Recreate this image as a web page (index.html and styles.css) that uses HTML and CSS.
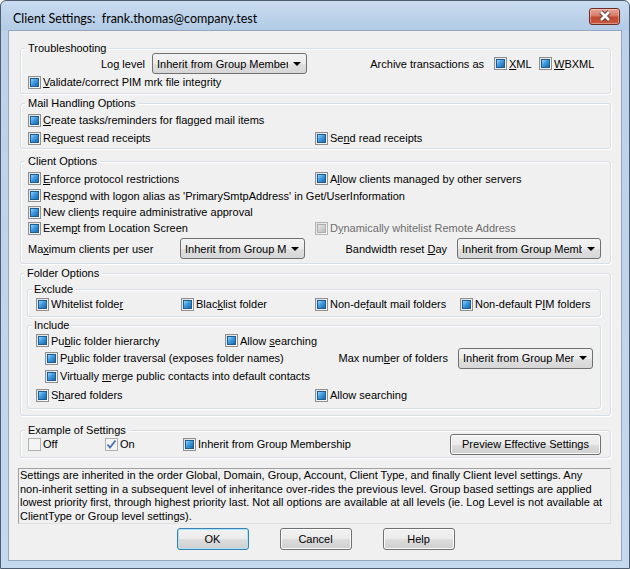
FILE: index.html
```html
<!DOCTYPE html>
<html lang="en">
<head>
  <meta charset="UTF-8" />
  <title>Client Settings</title>
  <link rel="stylesheet" href="styles.css">
</head>
<body>
  <div class="window">
    <div class="titlebar">
      <span class="title">Client Settings:&nbsp; frank.thomas@company.test</span>
      <button class="close" aria-label="Close">
        <svg width="16" height="12" viewBox="0 0 16 12">
          <path d="M4 2 L12 10 M12 2 L4 10" stroke="#6b3a33" stroke-width="4.6" />
          <path d="M4 2 L12 10 M12 2 L4 10" stroke="#ffffff" stroke-width="2.6" />
        </svg>
      </button>
    </div>

    <div class="client">

      <div class="group troubleshooting">
        <div class="group-title">Troubleshooting</div>
        <div class="row row-combo first-combo">
          <span class="field-label log-label">Lo<u>g</u> level</span>
          <div class="combo combo-log"><span class="combo-text">Inherit from Group Membership</span><span class="combo-arrow"></span></div>
          <span class="archive-label">Archive transactions as</span>
          <label class="check w-xml"><span class="cb"></span><span><u>X</u>ML</span></label>
          <label class="check w-wbxml"><span class="cb"></span><span><u>W</u>BXML</span></label>
        </div>
        <div class="row h16">
          <label class="check"><span class="cb"></span><span><u>V</u>alidate/correct PIM mrk file integrity</span></label>
        </div>
      </div>

      <div class="group mail">
        <div class="group-title">Mail Handling Options</div>
        <div class="row h18 first">
          <label class="check"><span class="cb"></span><span><u>C</u>reate tasks/reminders for flagged mail items</span></label>
        </div>
        <div class="row h18">
          <label class="check col-left"><span class="cb"></span><span>Re<u>q</u>uest read receipts</span></label>
          <label class="check"><span class="cb"></span><span>Se<u>n</u>d read receipts</span></label>
        </div>
      </div>

      <div class="group client-options">
        <div class="group-title">Client Options</div>
        <div class="row first">
          <label class="check col-left"><span class="cb"></span><span><u>E</u>nforce protocol restrictions</span></label>
          <label class="check"><span class="cb"></span><span>A<u>l</u>low clients managed by other servers</span></label>
        </div>
        <div class="row">
          <label class="check"><span class="cb"></span><span>Resp<u>o</u>nd with logon alias as 'PrimarySmtpAddress' in Get/UserInformation</span></label>
        </div>
        <div class="row h16">
          <label class="check"><span class="cb"></span><span>New clien<u>t</u>s require administrative approval</span></label>
        </div>
        <div class="row h16">
          <label class="check col-left"><span class="cb"></span><span>Exem<u>p</u>t from Location Screen</span></label>
          <label class="check disabled"><span class="cb cb-disabled"></span><span>D<u>y</u>namically whitelist Remote Address</span></label>
        </div>
        <div class="row row-combo">
          <span class="field-label max-label">Ma<u>x</u>imum clients per user</span>
          <div class="combo combo-max"><span class="combo-text">Inherit from Group Membership</span><span class="combo-arrow"></span></div>
          <span class="field-label bw-label">Bandwidth reset <u>D</u>ay</span>
          <div class="combo combo-bw"><span class="combo-text">Inherit from Group Membership</span><span class="combo-arrow"></span></div>
        </div>
      </div>

      <div class="group folder">
        <div class="group-title">Folder Options</div>

        <div class="group sub exclude">
          <div class="group-title">Exclude</div>
          <div class="row h16 exclude-row">
            <label class="check"><span class="cb"></span><span>Whitelist folde<u>r</u></span></label>
            <label class="check"><span class="cb"></span><span>Blac<u>k</u>list folder</span></label>
            <label class="check"><span class="cb"></span><span>Non-de<u>f</u>ault mail folders</span></label>
            <label class="check"><span class="cb"></span><span>Non-default P<u>I</u>M folders</span></label>
          </div>
        </div>

        <div class="group sub include">
          <div class="group-title">Include</div>
          <div class="row">
            <label class="check col-pub"><span class="cb"></span><span>Pu<u>b</u>lic folder hierarchy</span></label>
            <label class="check"><span class="cb"></span><span>Allow <u>s</u>earching</span></label>
          </div>
          <div class="row h18 indent">
            <label class="check"><span class="cb"></span><span>P<u>u</u>blic folder traversal (exposes folder names)</span></label>
            <span class="field-label folders-label">Max num<u>b</u>er of folders</span>
            <div class="combo combo-folders"><span class="combo-text">Inherit from Group Membership</span><span class="combo-arrow"></span></div>
          </div>
          <div class="row h18 indent">
            <label class="check"><span class="cb"></span><span>Virtually <u>m</u>erge public contacts into default contacts</span></label>
          </div>
          <div class="row h20">
            <label class="check col-left-sub"><span class="cb"></span><span>S<u>h</u>ared folders</span></label>
            <label class="check"><span class="cb"></span><span>Allow searching</span></label>
          </div>
        </div>
      </div>

      <div class="group example">
        <div class="group-title">Example of Settings</div>
        <div class="row h18 example-row">
          <label class="check col-off"><span class="cb cb-off"></span><span>Off</span></label>
          <label class="check col-on"><span class="cb cb-off"><svg width="11" height="11" viewBox="0 0 11 11"><path d="M1.5 5.5 L4 8.5 L9.5 1.5" fill="none" stroke="#4d6fb5" stroke-width="1.8" /></svg></span><span>On</span></label>
          <label class="check"><span class="cb"></span><span>Inherit from Group Membership</span></label>
          <button class="btn btn-preview">Preview Effective Settings</button>
        </div>
      </div>

      <div class="info">
        Settings are inherited in the order Global, Domain, Group, Account, Client Type, and finally Client level settings. Any<br>
        non-inherit setting in a subsequent level of inheritance over-rides the previous level. Group based settings are applied<br>
        lowest priority first, through highest priority last. Not all options are available at all levels (ie. Log Level is not available at<br>
        ClientType or Group level settings).
      </div>

      <div class="buttons">
        <button class="btn btn-default">OK</button>
        <button class="btn">Cancel</button>
        <button class="btn">Help</button>
      </div>
    </div>
  </div>
</body>
</html>
```

FILE: styles.css
```css
html, body {
  margin: 0;
  padding: 0;
  background: #ffffff;
}

body {
  font-family: 'Liberation Sans', Arial, sans-serif;
  font-size: 11px;
  color: #000;
}

.window {
  width: 630px;
  height: 569px;
  box-sizing: border-box;
  border: 1px solid #4e5d70;
  border-radius: 6px 6px 0 0;
  background: linear-gradient(to bottom, #c9dbef 0, #b3cbe6 29px, #bcd2ea 30px, #c4d8ee 100%);
  display: flex;
  flex-direction: column;
}

.titlebar {
  height: 29px;
  display: flex;
  align-items: center;
  padding: 0 0 0 12px;
  flex: none;
}

.title {
  font-family: Lato, 'Liberation Sans', sans-serif;
  font-size: 12.5px;
  color: #000;
  padding-top: 6px;
  flex: 1;
}

.close {
  width: 31px;
  height: 17px;
  margin: 1px 9px 0 0;
  padding: 0;
  border: 1px solid #6e2b22;
  border-radius: 3px;
  background: linear-gradient(to bottom, #e8a597 0%, #d97a66 45%, #c2482f 55%, #c95a40 100%);
  box-shadow: inset 0 0 0 1px rgba(255, 255, 255, 0.35);
  display: flex;
  align-items: center;
  justify-content: center;
}

.client {
  flex: 1;
  margin: 0 7px 7px;
  border: 1px solid #93a8c0;
  background: #f0f0f0;
  padding: 17px 10px 0 11px;
}

/* group boxes */
.group {
  border: 1px solid #d5dfe5;
  border-radius: 3px;
  padding: 0 7px;
  box-shadow: inset 1px 1px 0 #fff, 1px 1px 0 #fff;
}

.sub {
  padding: 0 7px 0 8px;
}

.group-title {
  display: block;
  width: max-content;
  height: 13px;
  line-height: 13px;
  margin: -7px 0 0 -3px;
  padding: 0 3px;
  background: #f0f0f0;
}

.sub .group-title {
  margin-left: -4px;
  padding: 0 2px;
}

.row {
  display: flex;
  align-items: center;
  height: 17px;
  white-space: nowrap;
}

.row.h16 { height: 16px; }
.row.h18 { height: 18px; }
.row.h20 { height: 20px; }

.row-combo {
  height: 21px;
}

.check {
  display: flex;
  align-items: center;
  flex: none;
}

.check.disabled {
  color: #6d6d6d;
}

.col-left { width: 287px; }

/* checkboxes */
.cb {
  width: 13px;
  height: 13px;
  box-sizing: border-box;
  border: 1px solid #8f8f8f;
  background: linear-gradient(135deg, #dedede, #fdfdfd);
  padding: 1px;
  margin-right: 2px;
  flex: none;
}

.cb::after {
  content: "";
  display: block;
  width: 9px;
  height: 9px;
  box-sizing: border-box;
  border: 1px solid #1f5c8f;
  background: linear-gradient(135deg, #96d4fb 0%, #3f9ae0 45%, #1b68ad 100%);
}

.cb-disabled {
  border-color: #b4b4b4;
}

.cb-disabled::after {
  border-color: #acacac;
  background: linear-gradient(135deg, #e6e6e6, #bcbcbc);
}

.cb-off {
  border-color: #b1b1b1;
  background: #f4f4f4;
  padding: 0;
}

.cb-off::after {
  display: none;
}

.cb-off svg {
  display: block;
}

/* combo boxes */
.combo {
  display: flex;
  align-items: center;
  height: 21px;
  box-sizing: border-box;
  border: 1px solid #707070;
  border-radius: 3px;
  background: linear-gradient(to bottom, #f3f3f3 0%, #ececec 50%, #e0e0e0 51%, #d6d6d6 100%);
  padding: 0 5px 0 4px;
  flex: none;
}

.combo-text {
  flex: 1;
  overflow: hidden;
  white-space: nowrap;
}

.combo-arrow {
  width: 0;
  height: 0;
  border-left: 4px solid transparent;
  border-right: 4px solid transparent;
  border-top: 4px solid #000;
  margin-left: 5px;
  flex: none;
}

.field-label {
  flex: none;
}

/* troubleshooting */
.troubleshooting {
  padding-bottom: 3px;
}

.first-combo {
  margin-top: -2px;
}

.log-label {
  width: 117px;
  text-align: right;
  margin-right: 7px;
}

.combo-log { width: 155px; }

.archive-label {
  margin-left: auto;
  margin-right: 10px;
}

.w-xml { width: 45px; }
.w-wbxml { width: 64px; }

/* mail */
.mail {
  margin-top: 9px;
  padding-bottom: 1px;
}

.mail .first { margin-top: 1px; }

/* client options */
.client-options {
  margin-top: 12px;
  padding-bottom: 4px;
}

.client-options .first { margin-top: 2px; }

.client-options .row-combo { margin-top: 2px; }

.max-label { width: 152px; }

.combo-max { width: 125px; }

.bw-label {
  margin-left: auto;
  margin-right: 10px;
}

.combo-bw {
  width: 144px;
  margin-right: 2px;
}

/* folder options */
.folder {
  margin-top: 9px;
  padding: 0 9px 6px 6px;
}

.exclude {
  margin-top: 9px;
  padding-bottom: 4px;
}

.exclude-row {
  display: grid;
  grid-template-columns: 145px 134px 145px auto;
  align-items: center;
}

.include {
  margin-top: 8px;
  padding-bottom: 3px;
}

.include .indent {
  padding-left: 9px;
}

.col-pub { width: 189px; }

.col-left-sub { width: 279px; }

.folders-label {
  margin-left: auto;
  margin-right: 10px;
}

.combo-folders { width: 135px; }

/* example */
.example {
  margin-top: 14px;
  padding-bottom: 4px;
}

.example-row { margin-top: -2px; }

.col-off { width: 77px; }
.col-on { width: 78px; }

/* buttons */
.btn {
  font-family: inherit;
  font-size: 11px;
  color: #000;
  height: 22px;
  width: 72px;
  padding: 0;
  border: 1px solid #707070;
  border-radius: 3px;
  background: linear-gradient(to bottom, #f2f2f2 0%, #ebebeb 50%, #dddddd 51%, #cfcfcf 100%);
  box-shadow: inset 0 0 0 1px #fbfbfb;
}

.btn-preview {
  width: 151px;
  height: 21px;
  margin-left: auto;
  margin-right: 2px;
}

.btn-default {
  border-color: #3c7fb1;
  box-shadow: inset 0 0 0 1px #a8e4fb;
}

.info {
  margin: 10px 0 0 -2px;
  border: 1px solid;
  border-color: #a0a0a0 #e0e0e0 #e0e0e0 #a0a0a0;
  line-height: 13.5px;
  padding: 0 0 0 1px;
  white-space: nowrap;
  overflow: hidden;
}

.buttons {
  display: flex;
  justify-content: center;
  gap: 31px;
  margin-top: 4px;
}
```
